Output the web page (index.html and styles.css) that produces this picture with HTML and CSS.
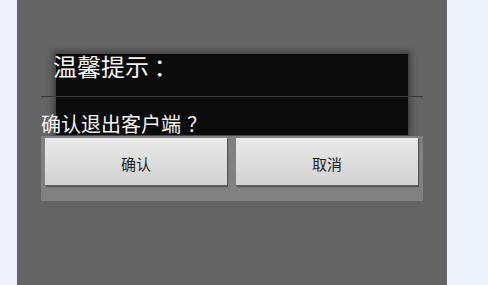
FILE: index.html
```html
<!DOCTYPE html>
<html lang="zh-CN">
<head>
<meta charset="utf-8">
<title>温馨提示</title>
<link rel="stylesheet" href="styles.css">
</head>
<body>
<div class="page">
  <div class="screen">
    <div class="dialog">
      <div class="dialog-body">
        <div class="title">温馨提示<span class="punct">：</span></div>
        <div class="divider"></div>
        <div class="message">确认退出客户端<span class="punct punct-q">？</span></div>
      </div>
      <div class="button-panel">
        <div class="btn">确认</div>
        <div class="btn">取消</div>
      </div>
    </div>
  </div>
</div>
</body>
</html>
```

FILE: styles.css
```css
html, body {
  margin: 0;
  padding: 0;
}
body {
  background: #eef2fa;
  font-family: "Noto Sans CJK SC", "Noto Sans", sans-serif;
  width: 488px;
  height: 285px;
  overflow: hidden;
}
.page {
  display: flex;
  height: 285px;
  padding-left: 17px;
}
.screen {
  width: 430px;
  height: 285px;
  background: #646464;
  padding-top: 53px;
  padding-left: 24px;
  box-sizing: border-box;
}
.dialog {
  width: 382px;
  display: flex;
  flex-direction: column;
}
.dialog-body {
  margin: 0 14px;
  background: #0b0b0b;
  border: 1px solid #474747;
  box-shadow: 0 0 6px 2px rgba(0, 0, 0, 0.35);
  display: flex;
  flex-direction: column;
}
.title {
  color: #f4f4f4;
  font-size: 24px;
  line-height: 28px;
  margin-top: -2px;
  margin-left: -3px;
  white-space: nowrap;
}
.punct {
  display: inline-block;
  width: 1em;
  text-align: center;
  padding-left: 0.2em;
  box-sizing: border-box;
}
.punct-q {
  padding-left: 0.3em;
}
.divider {
  height: 1px;
  background: #393939;
  margin: 16px -15px 0;
}
.message {
  color: #f4f4f4;
  font-size: 20px;
  line-height: 23px;
  margin: 15px 0 0 -15px;
  white-space: nowrap;
}
.button-panel {
  background: #818181;
  height: 65px;
  box-sizing: border-box;
  padding: 2px 5px 0 4px;
  display: flex;
  gap: 9px;
  align-items: flex-start;
}
.btn {
  flex: 1;
  height: 48px;
  background: linear-gradient(#e9e9e9, #d2d2d2);
  border-bottom: 1px solid #5f5f5f;
  box-shadow: 1px 1px 1px rgba(0, 0, 0, 0.35);
  color: #1e1e1e;
  font-size: 15px;
  display: flex;
  align-items: center;
  justify-content: center;
  padding-top: 3px;
  box-sizing: border-box;
}
```
